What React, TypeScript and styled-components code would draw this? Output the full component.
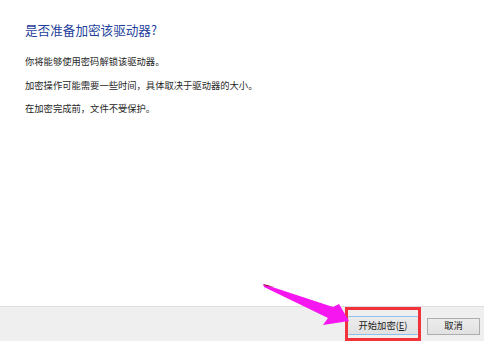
import React from "react";
import styled, { createGlobalStyle } from "styled-components";

const Global = createGlobalStyle`
  html, body { margin: 0; padding: 0; background: #ffffff; }
  body { font-family: "Noto Sans CJK SC", "Noto Sans", sans-serif; }
`;

const Page = styled.div`
  position: relative;
  width: 500px;
  height: 341px;
  background: #ffffff;
  overflow: hidden;
`;

const Dialog = styled.div`
  width: 484px;
  height: 341px;
  display: flex;
  flex-direction: column;
`;

const Content = styled.div`
  flex: 1;
  padding: 21px 0 0 25px;
  display: flex;
  flex-direction: column;
`;

const Title = styled.h1`
  margin: 0 0 11px 0;
  font-size: 12.6px;
  line-height: 18px;
  font-weight: normal;
  color: #1f3f9c;
`;

const Para = styled.p`
  margin: 0;
  font-size: 9.3px;
  line-height: 23.5px;
  color: #1f1f1f;
  height: 23.5px;
`;

const Footer = styled.div`
  height: 34px;
  border-top: 1px solid #dedede;
  background: #efefef;
  display: flex;
  justify-content: flex-end;
  align-items: center;
  padding-right: 4px;
  gap: 6px;
`;

const Highlight = styled.div`
  border: 3px solid #f2323a;
  padding: 6px 0 3px 0;
  display: flex;
`;

const Slot = styled.div`
  display: flex;
  padding-top: 4px;
`;

const Button = styled.button<{ $primary?: boolean }>`
  font-family: "Noto Sans CJK SC", sans-serif;
  font-size: 9.3px;
  color: #1a1a1a;
  height: ${(p) => (p.$primary ? "19px" : "17px")};
  width: ${(p) => (p.$primary ? "70px" : "53px")};
  padding: 0;
  margin: 0;
  border: 1px solid ${(p) => (p.$primary ? "#8fc0ec" : "#adadad")};
  border-left-color: ${(p) => (p.$primary ? "#e1e1e1" : "#adadad")};
  border-right-color: ${(p) => (p.$primary ? "#e1e1e1" : "#adadad")};
  background: linear-gradient(#ececec, #e1e1e1);
  display: flex;
  align-items: center;
  justify-content: center;
  line-height: 1;
`;

const U = styled.span`
  text-decoration: underline;
`;

const Arrow = styled.svg`
  position: absolute;
  left: 0;
  top: 0;
  pointer-events: none;
`;

export default function App() {
  return (
    <>
      <Global />
      <Page>
        <Dialog>
          <Content>
            <Title>是否准备加密该驱动器?</Title>
            <Para>你将能够使用密码解锁该驱动器。</Para>
            <Para>加密操作可能需要一些时间，具体取决于驱动器的大小。</Para>
            <Para>在加密完成前，文件不受保护。</Para>
          </Content>
          <Footer>
            <Highlight>
              <Button $primary>
                开始加密(<U>E</U>)
              </Button>
            </Highlight>
            <Slot>
              <Button>取消</Button>
            </Slot>
          </Footer>
        </Dialog>
        <Arrow width="500" height="341" viewBox="0 0 500 341">
          <polygon
            points="263,284 333,307 339,304 349,321 323,325 328,318 264,287"
            fill="#f516f0"
          />
          <polygon points="263,284 275,287 266,286" fill="#9c1020" />
        </Arrow>
      </Page>
    </>
  );
}
